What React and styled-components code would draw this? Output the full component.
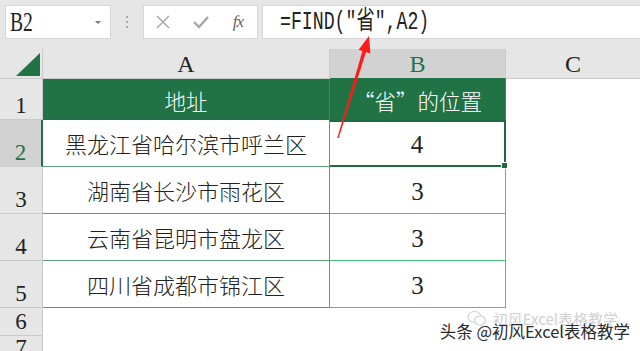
import React from "react";
import styled, { createGlobalStyle } from "styled-components";

const GlobalStyle = createGlobalStyle`
  html, body {
    margin: 0;
    padding: 0;
    background: #ffffff;
  }
`;

const CJK = `"Noto Sans CJK SC", "Noto Sans", sans-serif`;
const SERIF = `"Liberation Serif", "Noto Sans CJK SC", serif`;

const Window = styled.div`
  position: relative;
  width: 640px;
  height: 351px;
  overflow: hidden;
  background: #e6e6e6;
  font-family: ${CJK};
`;

const Toolbar = styled.div`
  display: flex;
  align-items: flex-start;
  height: 49px;
  padding: 5px 0 0 5px;
  box-sizing: border-box;
`;

const Box = styled.div`
  display: flex;
  align-items: center;
  box-sizing: border-box;
  height: 34px;
  background: #ffffff;
  border: 1px solid #d6d6d6;
  width: ${({ $w }) => ($w ? `${$w}px` : "auto")};
  flex: ${({ $grow }) => ($grow ? 1 : "none")};
  margin-left: ${({ $gap }) => ($gap ? `${$gap}px` : "0")};
`;

const NameText = styled.span`
  font-family: ${SERIF};
  font-size: 28px;
  line-height: 1;
  color: #222;
  margin-left: 4px;
  display: inline-block;
  transform: scaleX(0.7);
  transform-origin: left center;
  flex: 1;
`;

const Caret = styled.span`
  width: 0;
  height: 0;
  border-left: 3px solid transparent;
  border-right: 3px solid transparent;
  border-top: 3px solid #777;
  margin-right: 9px;
`;

const Grip = styled.div`
  width: 32px;
  height: 34px;
  display: flex;
  flex-direction: column;
  align-items: center;
  justify-content: center;
  gap: 3px;

  span {
    width: 2px;
    height: 2px;
    background: #a8a8a8;
  }
`;

const FxIcons = styled.div`
  display: flex;
  align-items: center;
  justify-content: space-between;
  width: 100%;
  padding: 0 14px 0 12px;
  color: #a6a6a6;
`;

const FxLabel = styled.span`
  font-family: "Liberation Serif", serif;
  font-style: italic;
  font-size: 17px;
  color: #666;
  letter-spacing: -1px;
`;

const FormulaText = styled.span`
  font-family: "Liberation Mono", "Noto Sans CJK SC", monospace;
  font-size: 26px;
  line-height: 1;
  color: #222;
  display: inline-block;
  margin-left: 17px;
  transform: scaleX(0.7);
  transform-origin: left center;
  white-space: nowrap;
`;

const Sheet = styled.div`
  display: grid;
  grid-template-columns: 43px 287px 176px 1fr;
  grid-template-rows: 30px 41px 47px 47px 47px 47px 28px 1fr;
  height: 302px;
  background: #ffffff;
`;

const Corner = styled.div`
  background: #e6e6e6;
  border-right: 1px solid #cacaca;
  border-bottom: 1px solid #cacaca;
  display: flex;
  align-items: flex-end;
  justify-content: flex-end;
  padding: 0 2px 2px 0;
`;

const ColHead = styled.div`
  background: ${({ $active }) => ($active ? "#d2d2d2" : "#e6e6e6")};
  border-right: 1px solid #cacaca;
  border-bottom: 1px solid ${({ $active }) => ($active ? "#217346" : "#cacaca")};
  display: flex;
  align-items: center;
  justify-content: center;
  font-family: ${SERIF};
  font-size: 24px;
  color: ${({ $active }) => ($active ? "#217346" : "#222")};
  padding-top: 2px;
  box-sizing: border-box;
`;

const RowHead = styled.div`
  background: ${({ $active }) => ($active ? "#d2d2d2" : "#e6e6e6")};
  border-bottom: 1px solid #cacaca;
  border-right: ${({ $active }) => ($active ? "2px solid #217346" : "1px solid #cacaca")};
  display: flex;
  align-items: flex-end;
  justify-content: center;
  font-family: ${SERIF};
  font-size: 23px;
  line-height: 1;
  color: ${({ $active }) => ($active ? "#217346" : "#222")};
  padding-bottom: 2px;
  box-sizing: border-box;
`;

const HeadCell = styled.div`
  background: #217346;
  color: #ffffff;
  display: flex;
  align-items: center;
  justify-content: center;
  font-size: 21.5px;
  font-weight: 300;
  border-right: 1px solid #3a8a5c;
  padding-top: 2px;
  box-sizing: border-box;
`;

const Quote = styled.span`
  display: inline-block;
  width: 1em;
  text-align: ${({ $side }) => $side};
`;

const Cell = styled.div`
  display: flex;
  align-items: center;
  justify-content: center;
  box-sizing: border-box;
  font-size: ${({ $num }) => ($num ? "25px" : "22px")};
  font-family: ${({ $num }) => ($num ? SERIF : CJK)};
  font-weight: ${({ $num }) => ($num ? 400 : 300)};
  color: #222;
  border-bottom: 1px solid ${({ $tone }) => ($tone === "b" ? "#46c777" : "#5d9a78")};
  border-right: 1px solid ${({ $tone }) => ($tone === "b" ? "#46c777" : "#5d9a78")};
  padding-top: ${({ $num }) => ($num ? "3px" : "0")};
`;

const ActiveCell = styled(Cell)`
  position: relative;
  border: 2px solid #1e6b41;
  border-left-width: 0;
`;

const Handle = styled.span`
  position: absolute;
  right: -4px;
  bottom: -4px;
  width: 5px;
  height: 5px;
  background: #1e6b41;
  border: 1px solid #ffffff;
`;

const Blank = styled.div`
  background: #ffffff;
`;

const Overlay = styled.svg`
  position: absolute;
  left: 0;
  top: 0;
  pointer-events: none;
`;

const Watermark = styled.div`
  position: absolute;
  right: 10px;
  bottom: 8px;
  font-family: ${CJK};
  font-size: 16.5px;
  color: #2a2a2a;
  white-space: nowrap;
  text-shadow: 0 0 2px #fff, 0 0 2px #fff, 0 0 1px #fff;
`;

const GhostMark = styled.div`
  position: absolute;
  right: 22px;
  bottom: 22px;
  display: flex;
  align-items: center;
  gap: 6px;
  font-family: ${CJK};
  font-size: 15px;
  color: #d0d0d0;
  white-space: nowrap;
`;

const rows = [
  { n: 2, a: "黑龙江省哈尔滨市呼兰区", b: "4" },
  { n: 3, a: "湖南省长沙市雨花区", b: "3" },
  { n: 4, a: "云南省昆明市盘龙区", b: "3" },
  { n: 5, a: "四川省成都市锦江区", b: "3" },
];

export default function App() {
  return (
    <Window lang="zh-CN">
      <GlobalStyle />
      <Toolbar>
        <Box $w={106}>
          <NameText>B2</NameText>
          <Caret />
        </Box>
        <Grip>
          <span />
          <span />
          <span />
        </Grip>
        <Box $w={115}>
          <FxIcons>
            <svg width="14" height="14" viewBox="0 0 14 14">
              <path d="M1 1 L13 13 M13 1 L1 13" stroke="currentColor" strokeWidth="1.4" fill="none" />
            </svg>
            <svg width="16" height="13" viewBox="0 0 16 13">
              <path d="M1 6 L6 11 L15 1" stroke="currentColor" strokeWidth="2.4" fill="none" />
            </svg>
            <FxLabel>fx</FxLabel>
          </FxIcons>
        </Box>
        <Box $grow $gap={4} style={{ borderRight: "none" }}>
          <FormulaText>=FIND("省",A2)</FormulaText>
        </Box>
      </Toolbar>

      <Sheet>
        <Corner>
          <svg width="24" height="23" viewBox="0 0 24 23">
            <polygon points="24,0 24,23 0,23" fill="#217346" />
          </svg>
        </Corner>
        <ColHead>A</ColHead>
        <ColHead $active>B</ColHead>
        <ColHead style={{ borderRight: "none" }}>C</ColHead>

        <RowHead>1</RowHead>
        <HeadCell>地址</HeadCell>
        <HeadCell>
          <Quote $side="center">“</Quote>省<Quote $side="left">”</Quote>的位置
        </HeadCell>
        <Blank />

        {rows.map((r) => (
          <React.Fragment key={r.n}>
            <RowHead $active={r.n === 2}>{r.n}</RowHead>
            <Cell>{r.a}</Cell>
            {r.n === 2 ? (
              <ActiveCell $num>
                {r.b}
                <Handle />
              </ActiveCell>
            ) : (
              <Cell $num $tone="b">
                {r.b}
              </Cell>
            )}
            <Blank />
          </React.Fragment>
        ))}

        <RowHead>6</RowHead>
        <Blank />
        <Blank />
        <Blank />
        <RowHead>7</RowHead>
        <Blank />
        <Blank />
        <Blank />
      </Sheet>

      <Overlay width="640" height="351" viewBox="0 0 640 351">
        <polygon points="337.3,138 338.7,138 366.8,49.6 363.2,48.4" fill="#ff1a1a" />
        <polygon points="369,36 358.6,49.8 370.4,53.4" fill="#ff1a1a" />
      </Overlay>

      <GhostMark>
        <svg width="20" height="17" viewBox="0 0 20 17">
          <ellipse cx="7.5" cy="7" rx="6.5" ry="5.5" stroke="#d0d0d0" fill="none" strokeWidth="1.2" />
          <ellipse cx="13" cy="10.5" rx="5.5" ry="4.5" stroke="#d0d0d0" fill="#fff" strokeWidth="1.2" />
        </svg>
        初风Excel表格教学
      </GhostMark>
      <Watermark>头条 @初风Excel表格教学</Watermark>
    </Window>
  );
}
